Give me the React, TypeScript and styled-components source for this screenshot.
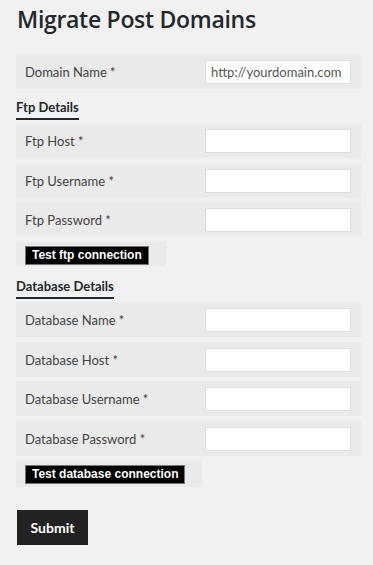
import React from "react";
import styled, { createGlobalStyle } from "styled-components";

const GlobalStyle = createGlobalStyle`
  html, body {
    margin: 0;
    padding: 0;
    background: #f1f1f1;
  }
  body {
    font-family: Lato, "Open Sans", sans-serif;
    color: #444;
  }
`;

const Page = styled.div`
  padding: 5px 12px 40px 16px;
`;

const Title = styled.h1`
  margin: 0 0 20px 1px;
  font-family: "Open Sans", "Noto Sans", sans-serif;
  font-size: 23px;
  line-height: 29px;
  font-weight: 600;
  letter-spacing: -0.3px;
  color: #23282d;
`;

const Section = styled.div`
  display: flex;
  flex-direction: column;
  align-items: flex-start;
  gap: 4.67px;
`;

const Row = styled.div`
  align-self: stretch;
  display: flex;
  align-items: center;
  height: 35px;
  padding: 1px 11px 0 9px;
  box-sizing: border-box;
  background: #eaeaea;
`;

const Label = styled.label`
  flex: 0 0 180px;
  font-size: 13px;
  color: #444;
`;

const Field = styled.input`
  box-sizing: border-box;
  width: 146px;
  height: 24px;
  margin-left: auto;
  padding: 0 5px;
  border: 1px solid #ddd;
  background: #fff;
  font-family: inherit;
  font-size: 13px;
  color: #555;
  outline: none;
  &::placeholder {
    color: #555;
  }
`;

const Heading = styled.h3`
  display: block;
  width: fit-content;
  margin: 8px 0 3px;
  padding-bottom: 1px;
  border-bottom: 2px solid #23282d;
  font-size: 13px;
  line-height: 20px;
  font-weight: 700;
  color: #23282d;
`;

const TestCell = styled.div<{ $wide?: boolean }>`
  display: flex;
  height: ${(p) => (p.$wide ? 26 : 24)}px;
  box-sizing: border-box;
  margin-bottom: 2px;
  padding: 4px 17px 0 9px;
  background: #eaeaea;
`;

const TestButton = styled.button`
  height: 19px;
  padding: 0 6px;
  border: 1px solid #777;
  background: #000;
  color: #fff;
  font-family: "Liberation Sans", Arial, sans-serif;
  font-size: 12px;
  font-weight: 700;
  line-height: 17px;
  cursor: pointer;
`;

const Submit = styled.button`
  margin: 21px 0 0 1px;
  width: 71px;
  height: 35px;
  border: none;
  background: #222;
  color: #fff;
  font-family: inherit;
  font-size: 14px;
  font-weight: 700;
  cursor: pointer;
`;

const ftpFields = ["Ftp Host *", "Ftp Username *", "Ftp Password *"];
const dbFields = [
  "Database Name *",
  "Database Host *",
  "Database Username *",
  "Database Password *",
];

export default function App() {
  return (
    <Page>
      <GlobalStyle />
      <Title>Migrate Post Domains</Title>
      <Section>
        <Row>
          <Label>Domain Name *</Label>
          <Field placeholder="http://yourdomain.com" />
        </Row>
      </Section>

      <Heading>Ftp Details</Heading>
      <Section>
        {ftpFields.map((f) => (
          <Row key={f}>
            <Label>{f}</Label>
            <Field type={f.includes("Password") ? "password" : "text"} />
          </Row>
        ))}
        <TestCell>
          <TestButton>Test ftp connection</TestButton>
        </TestCell>
      </Section>

      <Heading>Database Details</Heading>
      <Section>
        {dbFields.map((f) => (
          <Row key={f}>
            <Label>{f}</Label>
            <Field type={f.includes("Password") ? "password" : "text"} />
          </Row>
        ))}
        <TestCell $wide>
          <TestButton>Test database connection</TestButton>
        </TestCell>
      </Section>

      <Submit>Submit</Submit>
    </Page>
  );
}
